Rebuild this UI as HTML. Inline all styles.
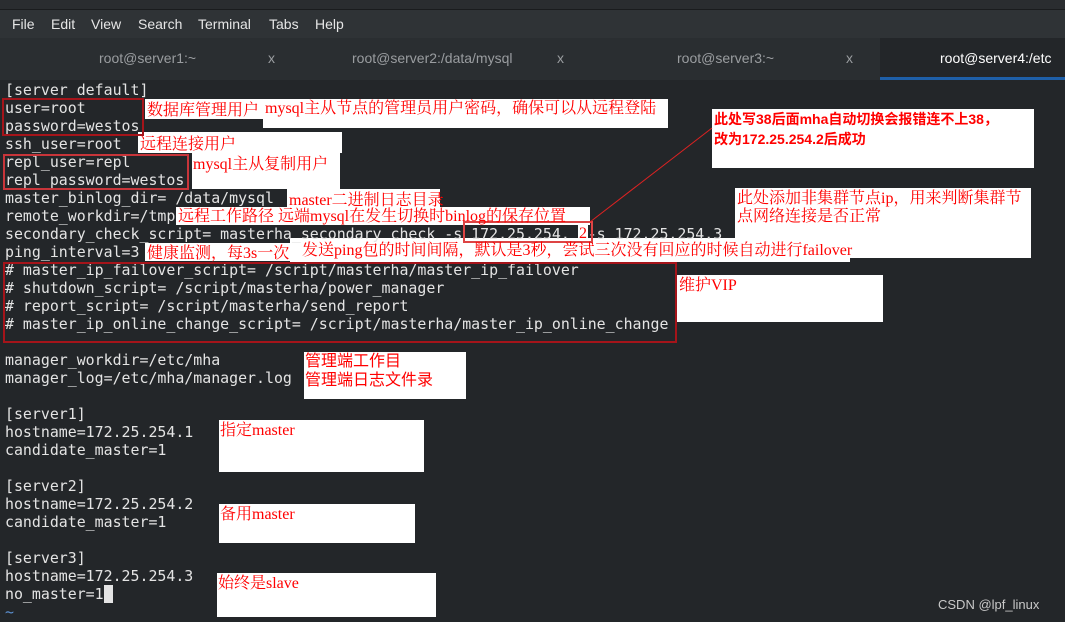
<!DOCTYPE html>
<html><head><meta charset="utf-8"><style>
*{margin:0;padding:0;box-sizing:border-box}
body{width:1065px;height:622px;overflow:hidden;background:#232629;position:relative;font-family:"Liberation Sans","Noto Sans CJK SC",sans-serif}
.top{position:absolute;left:0;top:0;width:1065px;height:10px;background:#2a2d30;border-bottom:1px solid #1a1c1e}
.menu{position:absolute;left:0;top:10px;width:1065px;height:28px;background:#2f3336;color:#e6e6e6;font-size:14px}
.menu span{position:absolute;top:6px}
.tabs{position:absolute;left:0;top:38px;width:1065px;height:42px;background:#2a2e31;color:#9a9da0;font-size:14px}
.tabs span{position:absolute;top:12px}
.act{position:absolute;left:880px;top:0;width:185px;height:42px;background:#232629;border-bottom:3px solid #1e5fa8}
.term{position:absolute;left:5px;top:81px;font-family:"DejaVu Sans Mono","Liberation Mono",monospace;font-size:14.9px;line-height:18px;color:#e4e4e4;white-space:pre}
.w{position:absolute;background:#fff}
.a{position:absolute;color:#f00;font-family:"Liberation Serif","Noto Serif CJK SC",serif;font-size:16px;line-height:18px;white-space:nowrap}
.rb{position:absolute;border:2px solid #a5141a}
</style></head><body>
<div class="top"></div>
<div class="menu"><span style="left:12px">File</span><span style="left:51px">Edit</span><span style="left:91px">View</span><span style="left:138px">Search</span><span style="left:198px">Terminal</span><span style="left:269px">Tabs</span><span style="left:315px">Help</span></div>
<div class="tabs">
<span style="left:99px">root@server1:~</span><span style="left:268px">x</span>
<span style="left:352px">root@server2:/data/mysql</span><span style="left:557px">x</span>
<span style="left:677px">root@server3:~</span><span style="left:846px">x</span>
<div class="act"></div><span style="left:940px;color:#fff">root@server4:/etc</span>
</div>

<div class="w" style="left:145px;top:99px;width:120px;height:20px"></div>
<div class="w" style="left:263px;top:99px;width:405px;height:29px"></div>
<div class="w" style="left:138px;top:132px;width:204px;height:21px"></div>
<div class="w" style="left:192px;top:153px;width:148px;height:36px"></div>
<div class="w" style="left:287px;top:189px;width:153px;height:18px"></div>
<div class="w" style="left:176px;top:207px;width:414px;height:18px"></div>
<div class="w" style="left:145px;top:243px;width:150px;height:18px"></div>
<div class="w" style="left:290px;top:238px;width:560px;height:24px"></div>
<div class="w" style="left:712px;top:109px;width:322px;height:59px"></div>
<div class="w" style="left:735px;top:188px;width:296px;height:70px"></div>
<div class="w" style="left:677px;top:275px;width:206px;height:47px"></div>
<div class="w" style="left:304px;top:352px;width:162px;height:47px"></div>
<div class="w" style="left:219px;top:420px;width:205px;height:52px"></div>
<div class="w" style="left:219px;top:504px;width:196px;height:39px"></div>
<div class="w" style="left:217px;top:573px;width:219px;height:44px"></div>

<div class="term">[server default]
user=root
password=westos
ssh_user=root
repl_user=repl
repl_password=westos
master_binlog_dir= /data/mysql
remote_workdir=/tmp
secondary_check_script= masterha_secondary_check -s 172.25.254.  -s 172.25.254.3
ping_interval=3
# master_ip_failover_script= /script/masterha/master_ip_failover
# shutdown_script= /script/masterha/power_manager
# report_script= /script/masterha/send_report
# master_ip_online_change_script= /script/masterha/master_ip_online_change

manager_workdir=/etc/mha
manager_log=/etc/mha/manager.log

[server1]
hostname=172.25.254.1
candidate_master=1

[server2]
hostname=172.25.254.2
candidate_master=1

[server3]
hostname=172.25.254.3
no_master=1<span style="background:#e4e4e4"> </span>
<span style="color:#5b8fd0">~</span></div>

<div class="rb" style="left:2px;top:98px;width:142px;height:38px"></div>
<div class="rb" style="left:3px;top:154px;width:186px;height:36px;border-color:#c8353a"></div>
<div class="rb" style="left:463px;top:221px;width:130px;height:22px;border-color:#d44"></div>
<div class="rb" style="left:3px;top:262px;width:674px;height:81px"></div>
<div class="w" style="left:578px;top:225px;width:10px;height:16px"></div>
<div class="a" style="left:579px;top:225px">2</div>
<svg style="position:absolute;left:0;top:0" width="1065" height="622"><line x1="590" y1="222" x2="712" y2="128" stroke="#d22" stroke-width="1"/></svg>

<div class="a" style="left:147px;top:102px">数据库管理用户</div>
<div class="a" style="left:265px;top:100px">mysql主从节点的管理员用户密码，确保可以从远程登陆</div>
<div class="a" style="left:140px;top:136px">远程连接用户</div>
<div class="a" style="left:193px;top:156px">mysql主从复制用户</div>
<div class="a" style="left:289px;top:192px">master二进制日志目录</div>
<div class="a" style="left:178px;top:208px">远程工作路径 远端mysql在发生切换时binlog的保存位置</div>
<div class="a" style="left:147px;top:245px">健康监测，每3s一次</div>
<div class="a" style="left:302px;top:242px">发送ping包的时间间隔，默认是3秒，尝试三次没有回应的时候自动进行failover</div>
<div class="a" style="left:714px;top:109px;font-size:14px;font-weight:bold;line-height:20px;font-family:'Liberation Sans','Noto Sans CJK SC',sans-serif">此处写38后面mha自动切换会报错连不上38，<br>改为172.25.254.2后成功</div>
<div class="a" style="left:737px;top:190px;line-height:18px">此处添加非集群节点ip，用来判断集群节<br>点网络连接是否正常</div>
<div class="a" style="left:679px;top:277px">维护VIP</div>
<div class="a" style="left:305px;top:352px;line-height:19px;font-family:'Liberation Sans','Noto Sans CJK SC',sans-serif">管理端工作目<br>管理端日志文件录</div>
<div class="a" style="left:220px;top:422px">指定master</div>
<div class="a" style="left:220px;top:506px">备用master</div>
<div class="a" style="left:218px;top:575px">始终是slave</div>
<div style="position:absolute;left:938px;top:597px;color:#c8c8c8;font-size:13px">CSDN @lpf_linux</div>
</body></html>
